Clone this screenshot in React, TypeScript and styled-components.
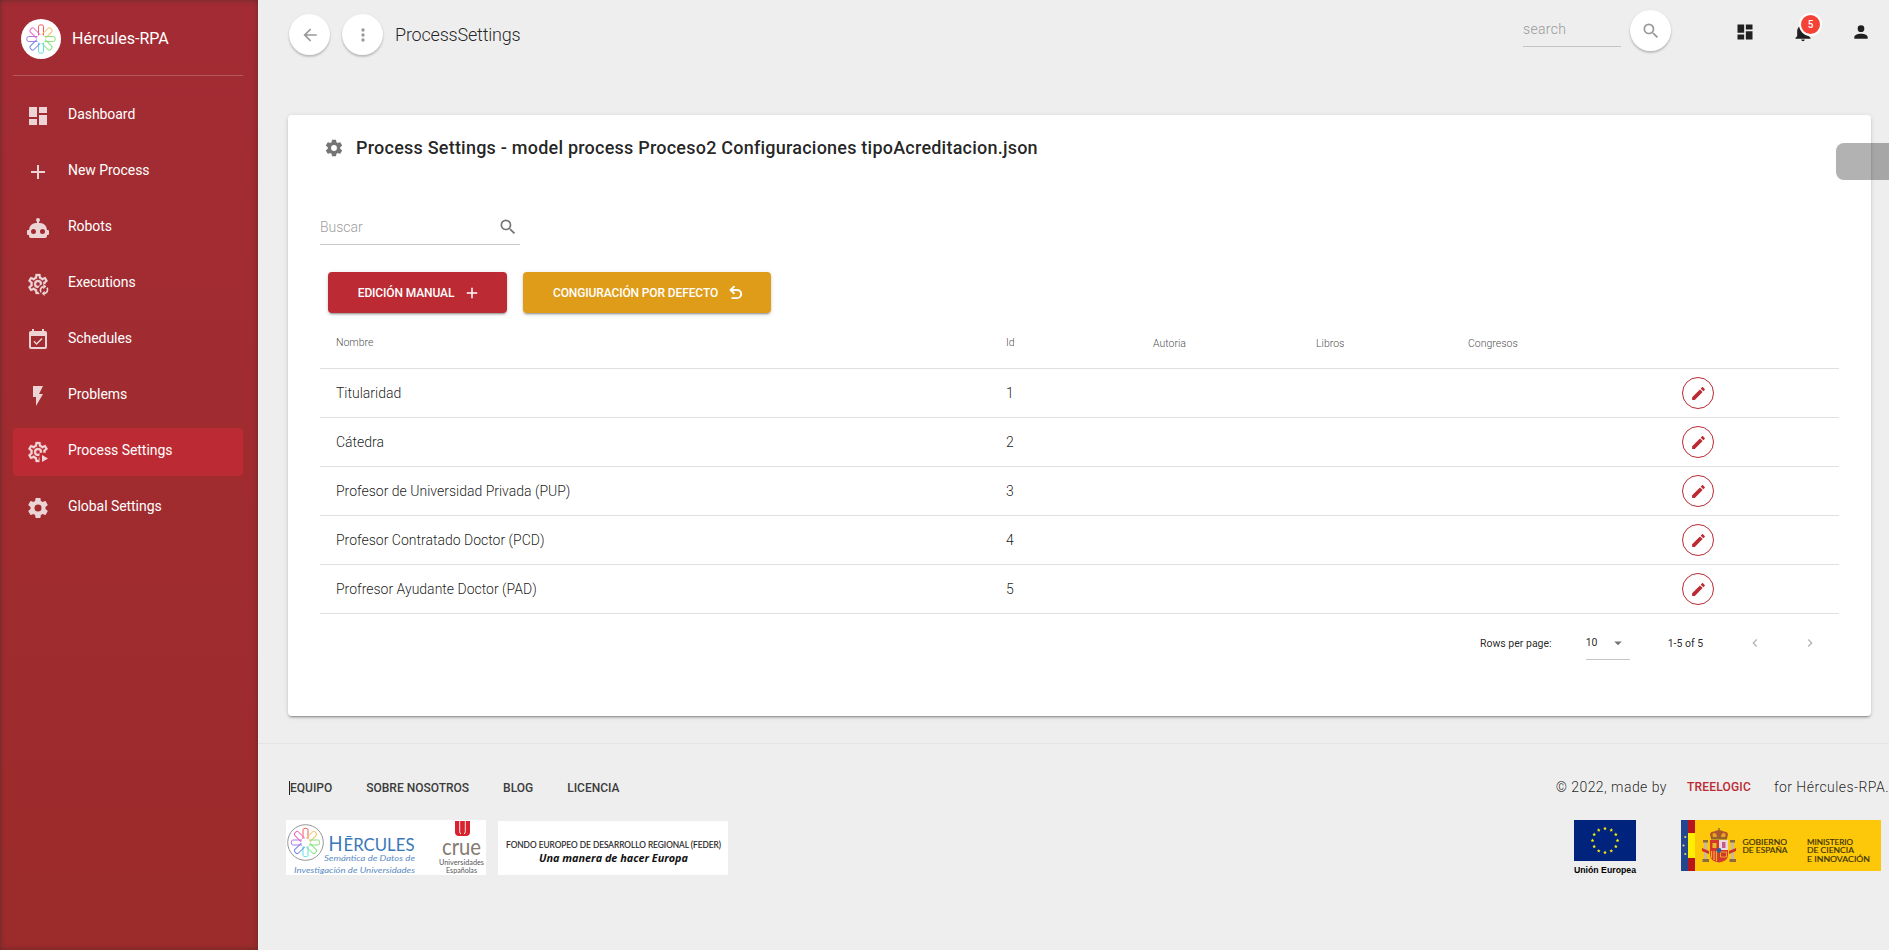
import React from 'react';
import styled, { createGlobalStyle } from 'styled-components';

const mdi = {
  dashboard: 'M13,3V9H21V3M13,21H21V11H13M3,21H11V15H3M3,13H11V3H3V13Z',
  plus: 'M19,13H13V19H11V13H5V11H11V5H13V11H19V13Z',
  robot:
    'M12,2A2,2 0 0,1 14,4C14,4.74 13.6,5.39 13,5.73V7H14A7,7 0 0,1 21,14H22A1,1 0 0,1 23,15V18A1,1 0 0,1 22,19H21V20A2,2 0 0,1 19,22H5A2,2 0 0,1 3,20V19H2A1,1 0 0,1 1,18V15A1,1 0 0,1 2,14H3A7,7 0 0,1 10,7H11V5.73C10.4,5.39 10,4.74 10,4A2,2 0 0,1 12,2M7.5,13A2.5,2.5 0 0,0 5,15.5A2.5,2.5 0 0,0 7.5,18A2.5,2.5 0 0,0 10,15.5A2.5,2.5 0 0,0 7.5,13M16.5,13A2.5,2.5 0 0,0 14,15.5A2.5,2.5 0 0,0 16.5,18A2.5,2.5 0 0,0 19,15.5A2.5,2.5 0 0,0 16.5,13Z',
  calendar:
    'M19,19H5V8H19M19,3H18V1H16V3H8V1H6V3H5C3.89,3 3,3.9 3,5V19A2,2 0 0,0 5,21H19A2,2 0 0,0 21,19V5A2,2 0 0,0 19,3M16.53,11.06L15.47,10L10.59,14.88L8.47,12.76L7.41,13.82L10.59,17L16.53,11.06Z',
  flash: 'M7,2V13H10V22L17,10H13L17,2H7Z',
  cog: 'M12,15.5A3.5,3.5 0 0,1 8.5,12A3.5,3.5 0 0,1 12,8.5A3.5,3.5 0 0,1 15.5,12A3.5,3.5 0 0,1 12,15.5M19.43,12.97C19.47,12.65 19.5,12.33 19.5,12C19.5,11.67 19.47,11.34 19.43,11L21.54,9.37C21.73,9.22 21.78,8.95 21.66,8.73L19.66,5.27C19.54,5.05 19.27,4.96 19.05,5.05L16.56,6.05C16.04,5.66 15.5,5.32 14.87,5.07L14.5,2.42C14.46,2.18 14.25,2 14,2H10C9.75,2 9.54,2.18 9.5,2.42L9.13,5.07C8.5,5.32 7.96,5.66 7.44,6.05L4.95,5.05C4.73,4.96 4.46,5.05 4.34,5.27L2.34,8.73C2.21,8.95 2.27,9.22 2.46,9.37L4.57,11C4.53,11.34 4.5,11.67 4.5,12C4.5,12.33 4.53,12.65 4.57,12.97L2.46,14.63C2.27,14.78 2.21,15.05 2.34,15.27L4.34,18.73C4.46,18.95 4.73,19.03 4.95,18.95L7.44,17.94C7.96,18.34 8.5,18.68 9.13,18.93L9.5,21.58C9.54,21.82 9.75,22 10,22H14C14.25,22 14.46,21.82 14.5,21.58L14.87,18.93C15.5,18.67 16.04,18.34 16.56,17.94L19.05,18.95C19.27,19.03 19.54,18.95 19.66,18.73L21.66,15.27C21.78,15.05 21.73,14.78 21.54,14.63L19.43,12.97Z',
  cogOutline:
    'M12,8A4,4 0 0,1 16,12A4,4 0 0,1 12,16A4,4 0 0,1 8,12A4,4 0 0,1 12,8M12,10A2,2 0 0,0 10,12A2,2 0 0,0 12,14A2,2 0 0,0 14,12A2,2 0 0,0 12,10M10,22C9.75,22 9.54,21.82 9.5,21.58L9.13,18.93C8.5,18.68 7.96,18.34 7.44,17.94L4.95,18.95C4.73,19.03 4.46,18.95 4.34,18.73L2.34,15.27C2.21,15.05 2.27,14.78 2.46,14.63L4.57,12.97L4.5,12L4.57,11L2.46,9.37C2.27,9.22 2.21,8.95 2.34,8.73L4.34,5.27C4.46,5.05 4.73,4.96 4.95,5.05L7.44,6.05C7.96,5.66 8.5,5.32 9.13,5.07L9.5,2.42C9.54,2.18 9.75,2 10,2H14C14.25,2 14.46,2.18 14.5,2.42L14.87,5.07C15.5,5.32 16.04,5.66 16.56,6.05L19.05,5.05C19.27,4.96 19.54,5.05 19.66,5.27L21.66,8.73C21.79,8.95 21.73,9.22 21.54,9.37L19.43,11L19.5,12L19.43,13L21.54,14.63C21.73,14.78 21.79,15.05 21.66,15.27L19.66,18.73C19.54,18.95 19.27,19.04 19.05,18.95L16.56,17.95C16.04,18.34 15.5,18.68 14.87,18.93L14.5,21.58C14.46,21.82 14.25,22 14,22H10M11.25,4L10.88,6.61C9.68,6.86 8.62,7.5 7.85,8.39L5.44,7.35L4.69,8.65L6.8,10.2C6.4,11.37 6.4,12.64 6.8,13.8L4.68,15.36L5.43,16.66L7.86,15.62C8.63,16.5 9.68,17.14 10.87,17.38L11.24,20H12.76L13.13,17.39C14.32,17.14 15.37,16.5 16.14,15.62L18.57,16.66L19.32,15.36L17.2,13.81C17.6,12.64 17.6,11.37 17.2,10.2L19.31,8.65L18.56,7.35L16.15,8.39C15.38,7.5 14.32,6.86 13.12,6.62L12.75,4H11.25Z',
  arrowLeft: 'M20,11V13H8L13.5,18.5L12.08,19.92L4.16,12L12.08,4.08L13.5,5.5L8,11H20Z',
  dots: 'M12,16A2,2 0 0,1 14,18A2,2 0 0,1 12,20A2,2 0 0,1 10,18A2,2 0 0,1 12,16M12,10A2,2 0 0,1 14,12A2,2 0 0,1 12,14A2,2 0 0,1 10,12A2,2 0 0,1 12,10M12,4A2,2 0 0,1 14,6A2,2 0 0,1 12,8A2,2 0 0,1 10,6A2,2 0 0,1 12,4Z',
  magnify:
    'M9.5,3A6.5,6.5 0 0,1 16,9.5C16,11.11 15.41,12.59 14.44,13.73L14.71,14H15.5L20.5,19L19,20.5L14,15.5V14.71L13.73,14.44C12.59,15.41 11.11,16 9.5,16A6.5,6.5 0 0,1 3,9.5A6.5,6.5 0 0,1 9.5,3M9.5,5C7,5 5,7 5,9.5C5,12 7,14 9.5,14C12,14 14,12 14,9.5C14,7 12,5 9.5,5Z',
  bell: 'M21,19V20H3V19L5,17V11C5,7.9 7.03,5.17 10,4.29C10,4.19 10,4.1 10,4A2,2 0 0,1 12,2A2,2 0 0,1 14,4C14,4.1 14,4.19 14,4.29C16.97,5.17 19,7.9 19,11V17L21,19M14,21A2,2 0 0,1 12,23A2,2 0 0,1 10,21',
  account:
    'M12,4A4,4 0 0,1 16,8A4,4 0 0,1 12,12A4,4 0 0,1 8,8A4,4 0 0,1 12,4M12,14C16.42,14 20,15.79 20,18V20H4V18C4,15.79 7.58,14 12,14Z',
  pencil:
    'M20.71,7.04C21.1,6.65 21.1,6 20.71,5.63L18.37,3.29C18,2.9 17.35,2.9 16.96,3.29L15.12,5.12L18.87,8.87M3,17.25V21H6.75L17.81,9.93L14.06,6.18L3,17.25Z',
  menuDown: 'M7,10L12,15L17,10H7Z',
  chevronLeft: 'M15.41,16.58L10.83,12L15.41,7.41L14,6L8,12L14,18L15.41,16.58Z',
  chevronRight: 'M8.59,16.58L13.17,12L8.59,7.41L10,6L16,12L10,18L8.59,16.58Z',
};

const GlobalStyle = createGlobalStyle`
  *, *::before, *::after { box-sizing: border-box; }
  html, body { margin: 0; overflow: hidden; background: #eee; }
  body { font-family: Roboto, sans-serif; color: rgba(0, 0, 0, 0.87); }
`;

const Shell = styled.div`
  display: flex;
  width: 100vw;
  height: 950px;
  overflow: hidden;
`;

const Sidebar = styled.aside`
  flex: none;
  width: 258px;
  padding: 0 15px 0 13px;
  color: #fff;
  background: linear-gradient(180deg, #a32c34 0%, #9c2b2b 100%);
  box-shadow: inset 0 0 5px rgba(40, 40, 40, 0.55);
`;

const Brand = styled.div`
  display: flex;
  align-items: center;
  height: 76px;
  padding: 2px 8px 0;
  gap: 11px;
  border-bottom: 1px solid rgba(255, 255, 255, 0.2);
  font-size: 16px;
`;

const BrandMark = styled.div`
  display: flex;
  align-items: center;
  justify-content: center;
  width: 40px;
  height: 40px;
  border-radius: 50%;
  background: #fff;
`;

const Nav = styled.nav`
  display: flex;
  flex-direction: column;
  gap: 8px;
  padding-top: 16px;
`;

const NavItem = styled.a<{ $active?: boolean }>`
  display: flex;
  align-items: center;
  height: 48px;
  padding: 0 13px;
  gap: 18px;
  border-radius: 4px;
  font-size: 14px;
  letter-spacing: -0.05px;
  background: ${(p) => (p.$active ? '#bc2a33' : 'transparent')};
  svg { opacity: 0.8; }
  span { margin-bottom: 4px; }
`;

const Main = styled.main`
  flex: 1;
  min-width: 0;
  display: flex;
  flex-direction: column;
`;

const TopBar = styled.header`
  display: flex;
  height: 115px;
  padding: 13px 18px 0 31px;
`;

const RoundButton = styled.button`
  display: flex;
  align-items: center;
  justify-content: center;
  width: 41px;
  height: 41px;
  padding: 0;
  border: 0;
  border-radius: 50%;
  background: #fff;
  color: #999;
  box-shadow: 0 2px 2px rgba(0, 0, 0, 0.14), 0 1px 3px rgba(0, 0, 0, 0.12);
`;

const TopLeft = styled.div`
  display: flex;
  align-items: center;
  gap: 12px;
  height: 43px;
  flex: 1;
`;

const PageName = styled.div`
  font-size: 18px;
  font-weight: 300;
  letter-spacing: -0.2px;
`;

const TopSearch = styled.div`
  width: 98px;
  height: 34px;
  padding-top: 7px;
  margin-right: 9px;
  border-bottom: 1px solid #c4c4c4;
  font-size: 14px;
  line-height: 18px;
  font-weight: 300;
  color: #9a9a9a;
  letter-spacing: 0.3px;
`;

const TopSearchButton = styled(RoundButton)`
  margin-top: -3px;
`;

const TopActions = styled.div`
  display: flex;
  align-items: flex-start;
  padding-top: 9px;
  margin-left: 64px;
  gap: 38px;
  color: #202020;
`;

const BellWrap = styled.div`
  position: relative;
  height: 20px;
`;

const Badge = styled.span`
  position: absolute;
  top: -9px;
  left: 6px;
  width: 23px;
  height: 23px;
  border: 2px solid #fff;
  border-radius: 50%;
  background: #f44336;
  color: #fff;
  font-size: 10px;
  font-weight: 500;
  line-height: 19px;
  text-align: center;
`;

const Card = styled.section`
  width: 1583px;
  height: 601px;
  margin-left: 30px;
  padding: 0 32px;
  border-radius: 4px;
  background: #fff;
  box-shadow: 0 3px 1px -2px rgba(0, 0, 0, 0.2), 0 2px 2px rgba(0, 0, 0, 0.14), 0 1px 5px rgba(0, 0, 0, 0.12);
`;

const CardTitle = styled.h1`
  display: flex;
  align-items: center;
  gap: 12px;
  height: 65px;
  margin: 0;
  padding-left: 4px;
  font-size: 18px;
  font-weight: 500;
  letter-spacing: 0.225px;
  svg { color: #757575; }
`;

const TableSearch = styled.div`
  display: flex;
  align-items: center;
  justify-content: space-between;
  width: 200px;
  height: 36px;
  margin-top: 29px;
  padding-right: 2px;
  border-bottom: 1px solid #c9c9c9;
  font-size: 14px;
  font-weight: 300;
  color: #a0a0a0;
  svg { color: #757575; }
`;

const Actions = styled.div`
  display: flex;
  gap: 16px;
  padding: 27px 0 0 8px;
`;

const ActionButton = styled.button<{ $color: string; $width: number }>`
  display: flex;
  align-items: center;
  justify-content: center;
  gap: 9px;
  width: ${(p) => p.$width}px;
  height: 41px;
  padding: 0 0 0 4px;
  border: 0;
  border-radius: 4px;
  background: ${(p) => p.$color};
  color: #fff;
  font-family: inherit;
  font-size: 12px;
  font-weight: 500;
  letter-spacing: -0.12px;
  box-shadow: 0 3px 1px -2px rgba(0, 0, 0, 0.2), 0 2px 2px rgba(0, 0, 0, 0.14), 0 1px 5px rgba(0, 0, 0, 0.12);
`;

const Row = styled.div<{ $head?: boolean }>`
  display: grid;
  grid-template-columns: 670px 147px 163px 152px 214px 173px;
  align-items: center;
  height: ${(p) => (p.$head ? 56 : 49)}px;
  padding-left: 16px;
  border-bottom: 1px solid #e0e0e0;
  font-size: ${(p) => (p.$head ? 10.5 : 14)}px;
  font-weight: 300;
  color: ${(p) => (p.$head ? 'rgba(0,0,0,0.75)' : 'rgba(0,0,0,0.9)')};
`;

const HeadCell = styled.span<{ $lower?: boolean }>`
  margin-top: ${(p) => (p.$lower ? 6 : 4)}px;
`;

const EditButton = styled.button`
  display: flex;
  align-items: center;
  justify-content: center;
  width: 32px;
  height: 32px;
  padding: 0;
  border: 1px solid #bc2a33;
  border-radius: 50%;
  background: transparent;
  color: #bc2a33;
`;

const Pager = styled.div`
  display: flex;
  align-items: center;
  height: 58px;
  padding-left: 1160px;
  font-size: 10.5px;
`;

const PageSize = styled.div`
  display: flex;
  align-items: center;
  justify-content: space-between;
  width: 44px;
  height: 34px;
  margin: 0 38px 0 34px;
  padding-right: 3px;
  border-bottom: 1px solid #c6c6c6;
  svg { color: #757575; }
`;

const PagerArrows = styled.div`
  display: flex;
  gap: 39px;
  margin-left: 44px;
  color: #b5b5b5;
`;

const Footer = styled.footer`
  margin-top: 27px;
  border-top: 1px solid #e4e4e4;
  padding: 29px 0 0 28px;
`;

const FooterRow = styled.div<{ $offset?: number }>`
  display: flex;
  justify-content: space-between;
  margin-top: ${(p) => p.$offset ?? 0}px;
`;

const FooterLinks = styled.div`
  display: flex;
  align-items: center;
  gap: 34px;
  height: 30px;
  padding-left: 4px;
  font-size: 12px;
  font-weight: 500;
  color: #3c3c3c;
`;

const FocusedLink = styled.span`
  box-shadow: -1px 0 0 #222;
`;

const Credits = styled.div`
  display: flex;
  align-items: center;
  height: 28px;
  font-size: 14px;
  font-weight: 300;
  letter-spacing: 0.45px;
  white-space: nowrap;
  strong { margin: 0 23px 0 20px; font-size: 12px; font-weight: 500; letter-spacing: 0.2px; color: #bc2a33; }
`;

const Logos = styled.div`
  display: flex;
  align-items: flex-start;
  svg { display: block; }
`;

const EdgeHandle = styled.div`
  position: absolute;
  top: 143px;
  right: 0;
  width: 53px;
  height: 37px;
  border-radius: 8px 0 0 8px;
  background: rgba(0, 0, 0, 0.3);
`;

function Icon({ path, size = 24 }: { path: string; size?: number }) {
  return (
    <svg width={size} height={size} viewBox="0 0 24 24" fill="currentColor">
      <path d={path} />
    </svg>
  );
}

function UndoIcon() {
  return (
    <svg width={18} height={18} viewBox="0 0 24 24" fill="none" stroke="currentColor" strokeWidth="2.6">
      <path d="M10 2.800L4.800 8L10 13.200M5 8H13.500A5.300 5.300 0 0 1 13.500 18.800H6" />
    </svg>
  );
}

function CogWith({ kind }: { kind: 'sync' | 'play' }) {
  return (
    <svg width={24} height={24} viewBox="0 0 24 24">
      <mask id={`cog-${kind}`}>
        <rect width="24" height="24" fill="#fff" />
        {kind === 'sync' ? <circle cx="18" cy="18" r="6" fill="#000" /> : <path d="M13.5 12.8H24V24H13.5Z" fill="#000" />}
      </mask>
      <path d={mdi.cogOutline} fill="currentColor" stroke="currentColor" strokeWidth="0.3" mask={`url(#cog-${kind})`} />
      {kind === 'sync' ? (
        <g fill="none" stroke="currentColor" strokeWidth="1.7">
          <path d="M15 20.2A3.6 3.6 0 0 1 17.6 14.6M21 15.8A3.6 3.6 0 0 1 18.4 21.4" />
          <path d="M17.3 11.800L20.300 14.600L17.300 17.300ZM18.700 18.700L15.700 21.400L18.700 24Z" fill="currentColor" stroke="none" />
        </g>
      ) : (
        <path d="M16 15V22L22 18.5Z" fill="currentColor" />
      )}
    </svg>
  );
}

const petals = ['#f25c5c', '#f5c264', '#8be07a', '#7be67b', '#5fe3e6', '#6f86ee', '#a77bea', '#ef66c8'];

function Flower({ ring }: { ring?: boolean }) {
  return (
    <g fill="none" strokeWidth="1">
      {ring && <circle r="17.8" stroke="#8a8a8a" strokeWidth="0.9" />}
      {petals.map((c, i) => (
        <path key={c} d="M-2.500 -3.500V-12.700Q-2.500 -14.200 0 -14.200Q2.500 -14.200 2.500 -12.700V-3.500" stroke={c} transform={`rotate(${i * 45})`} />
      ))}
    </g>
  );
}

function HerculesLogo() {
  return (
    <svg width="200" height="55" viewBox="0 0 200 55">
      <rect width="200" height="55" fill="#fff" />
      <g transform="translate(19.500 22.500)">
        <Flower ring />
      </g>
      <g fontFamily="Lato, sans-serif" fill="#3b78b8">
        <text x="42.500" y="30.500" fontSize="22" textLength="14" lengthAdjust="spacingAndGlyphs">H</text>
        <text x="57.500" y="30.500" fontSize="17.500" textLength="71" lengthAdjust="spacingAndGlyphs">ĒRCULES</text>
        <g fontStyle="italic" fontSize="8.500" fill="#5c8cc4">
          <text x="38" y="41" textLength="91" lengthAdjust="spacingAndGlyphs">Semántica de Datos de</text>
          <text x="8" y="52.500" textLength="121" lengthAdjust="spacingAndGlyphs">Investigación de Universidades</text>
        </g>
      </g>
      <path d="M169 1H184V12Q184 16 180 16H173Q169 16 169 12Z" fill="#d8232f" />
      <path d="M173.700 1V11.500Q173.700 13.500 175 14M179.300 1V11.500Q179.300 13.500 178 14" fill="none" stroke="#fff" strokeWidth="0.900" />
      <g fontFamily="Lato, sans-serif" fill="#857a70">
        <text x="156" y="34.500" fontSize="23" textLength="39" lengthAdjust="spacingAndGlyphs">crue</text>
        <text x="153" y="44.500" fontSize="7" textLength="45" lengthAdjust="spacingAndGlyphs" fill="#555">Universidades</text>
        <text x="160" y="52.800" fontSize="7" textLength="31" lengthAdjust="spacingAndGlyphs" fill="#555">Españolas</text>
      </g>
    </svg>
  );
}

function FederLogo() {
  return (
    <svg width="230" height="54" viewBox="0 0 230 54">
      <rect width="230" height="54" fill="#fff" />
      <text x="8" y="26.500" fontFamily="Lato, sans-serif" fontSize="8.500" fill="#222" stroke="#222" strokeWidth="0.150" textLength="215" lengthAdjust="spacingAndGlyphs">
        FONDO EUROPEO DE DESARROLLO REGIONAL (FEDER)
      </text>
      <text x="41" y="40.500" fontFamily="'Open Sans', sans-serif" fontSize="10.500" fontWeight="700" fontStyle="italic" fill="#111" textLength="149" lengthAdjust="spacingAndGlyphs">
        Una manera de hacer Europa
      </text>
    </svg>
  );
}

const star = 'M0 -2L0.5 -0.7L1.9 -0.6L0.8 0.3L1.2 1.6L0 0.9L-1.2 1.6L-0.8 0.3L-1.9 -0.6L-0.5 -0.7Z';

function EuropeLogo() {
  return (
    <svg width="64" height="56" viewBox="0 0 64 56">
      <rect x="1" width="62" height="41" fill="#00247d" />
      {Array.from({ length: 12 }, (_, i) => {
        const a = (i * Math.PI) / 6;
        return <path key={i} d={star} fill="#fff200" transform={`translate(${32 + Math.sin(a) * 12.5} ${20.5 - Math.cos(a) * 12})`} />;
      })}
      <text x="1" y="53" fontFamily="'Liberation Sans', sans-serif" fontSize="8.5" fontWeight="700" textLength="62" lengthAdjust="spacingAndGlyphs">
        Unión Europea
      </text>
    </svg>
  );
}

function GobiernoLogo() {
  return (
    <svg width="200" height="51" viewBox="0 0 200 51">
      <rect width="200" height="51" fill="#fdc80a" />
      <rect width="7" height="51" fill="#24468e" />
      <rect x="7" width="7" height="51" fill="#b8141b" />
      <rect x="7" y="13" width="7" height="25" fill="#ffee00" />
      {[17, 25.5, 34].map((y, i) => (
        <circle key={y} cx={i === 1 ? 2.5 : 4.3} cy={y} r="1.1" fill="#e8d860" />
      ))}
      <g>
        <path d="M23 22H26V40H23ZM50 22H53V40H50Z" fill="#c9b8a4" />
        <path d="M22 20H27V22.5H22ZM49 20H54V22.5H49ZM21.5 39H28V42H21.5ZM48.5 39H55V42H48.5Z" fill="#8d6b3d" />
        <path d="M21 28L28 31V34L21 31ZM55 28L48 31V34L55 31Z" fill="#d1332b" />
        <path d="M29 20H47V35Q47 41 38 42.5Q29 41 29 35Z" fill="#d4372c" />
        <path d="M38 20H47V30H38Z" fill="#e9d9dd" />
        <path d="M41 22H44.500V28H41Z" fill="#c75a8c" />
        <path d="M31.500 23H35.500V28H31.500Z" fill="#e9b92a" />
        <path d="M30.500 31V38M33 31V40M35.500 31V41" stroke="#efb62a" strokeWidth="1.200" />
        <path d="M39.500 32H45.500V37H39.500Z" fill="none" stroke="#e9a92a" />
        <circle cx="38" cy="30.500" r="2.400" fill="#2d5fa3" />
        <path d="M30 18.500Q27 11.500 33 11.500Q38 8.500 43 11.500Q49 11.500 46 18.500Z" fill="#b5532a" />
        <path d="M32 17Q30 13 34 13Q36 14 36 17ZM44 17Q46 13 42 13Q40 14 40 17Z" fill="#e2a52a" />
        <path d="M30 17.500H46V19.500H30ZM37.300 8H38.700V17H37.300Z" fill="#8c6a2c" />
      </g>
      <g fontFamily="Lato, sans-serif" fontSize="7.400" fill="#3a3008" stroke="#3a3008" strokeWidth="0.150">
        <text x="61.500" y="24.500" textLength="44.500" lengthAdjust="spacingAndGlyphs">GOBIERNO</text>
        <text x="61.500" y="33" textLength="45" lengthAdjust="spacingAndGlyphs">DE ESPAÑA</text>
        <text x="126" y="24.500" textLength="46" lengthAdjust="spacingAndGlyphs">MINISTERIO</text>
        <text x="126" y="33" textLength="47" lengthAdjust="spacingAndGlyphs">DE CIENCIA</text>
        <text x="126" y="42" textLength="63" lengthAdjust="spacingAndGlyphs">E INNOVACIÓN</text>
      </g>
    </svg>
  );
}

const EuropeSlot = styled.div`
  margin-right: 44px;
`;

const FederSlot = styled.div`
  margin: 1px 0 0 12px;
`;

const RightLogos = styled(Logos)`
  padding-right: 8px;
`;

const navItems: { label: string; icon: React.ReactNode; active?: boolean }[] = [
  { label: 'Dashboard', icon: <Icon path={mdi.dashboard} /> },
  { label: 'New Process', icon: <Icon path={mdi.plus} /> },
  { label: 'Robots', icon: <Icon path={mdi.robot} /> },
  { label: 'Executions', icon: <CogWith kind="sync" /> },
  { label: 'Schedules', icon: <Icon path={mdi.calendar} /> },
  { label: 'Problems', icon: <Icon path={mdi.flash} /> },
  { label: 'Process Settings', icon: <CogWith kind="play" />, active: true },
  { label: 'Global Settings', icon: <Icon path={mdi.cog} /> },
];

const rows = [
  'Titularidad',
  'Cátedra',
  'Profesor de Universidad Privada (PUP)',
  'Profesor Contratado Doctor (PCD)',
  'Profresor Ayudante Doctor (PAD)',
];

export default function App() {
  return (
    <Shell>
      <GlobalStyle />
      <Sidebar>
        <Brand>
          <BrandMark>
            <svg width="36" height="36" viewBox="-18 -18 36 36">
              <Flower />
            </svg>
          </BrandMark>
          Hércules-RPA
        </Brand>
        <Nav>
          {navItems.map((item) => (
            <NavItem key={item.label} $active={item.active}>
              {item.icon}
              <span>{item.label}</span>
            </NavItem>
          ))}
        </Nav>
      </Sidebar>
      <Main>
        <TopBar>
          <TopLeft>
            <RoundButton><Icon path={mdi.arrowLeft} size={20} /></RoundButton>
            <RoundButton><Icon path={mdi.dots} size={20} /></RoundButton>
            <PageName>ProcessSettings</PageName>
          </TopLeft>
          <TopSearch>search</TopSearch>
          <TopSearchButton><Icon path={mdi.magnify} size={20} /></TopSearchButton>
          <TopActions>
            <Icon path={mdi.dashboard} size={20} />
            <BellWrap>
              <Icon path={mdi.bell} size={20} />
              <Badge>5</Badge>
            </BellWrap>
            <Icon path={mdi.account} size={20} />
          </TopActions>
        </TopBar>
        <Card>
          <CardTitle>
            <Icon path={mdi.cog} size={20} />
            Process Settings - model process Proceso2 Configuraciones tipoAcreditacion.json
          </CardTitle>
          <TableSearch>
            Buscar
            <Icon path={mdi.magnify} size={20} />
          </TableSearch>
          <Actions>
            <ActionButton $color="#bc2a33" $width={179}>
              EDICIÓN MANUAL <Icon path={mdi.plus} size={18} />
            </ActionButton>
            <ActionButton $color="#df9c18" $width={248}>
              CONGIURACIÓN POR DEFECTO <UndoIcon />
            </ActionButton>
          </Actions>
          <Row $head>
            <HeadCell>Nombre</HeadCell>
            <HeadCell>Id</HeadCell>
            <HeadCell $lower>Autoria</HeadCell>
            <HeadCell $lower>Libros</HeadCell>
            <HeadCell $lower>Congresos</HeadCell>
          </Row>
          {rows.map((name, i) => (
            <Row key={name}>
              <span>{name}</span>
              <span>{i + 1}</span>
              <span />
              <span />
              <span />
              <EditButton><Icon path={mdi.pencil} size={17} /></EditButton>
            </Row>
          ))}
          <Pager>
            Rows per page:
            <PageSize>
              10
              <Icon path={mdi.menuDown} size={18} />
            </PageSize>
            1-5 of 5
            <PagerArrows>
              <Icon path={mdi.chevronLeft} size={16} />
              <Icon path={mdi.chevronRight} size={16} />
            </PagerArrows>
          </Pager>
        </Card>
        <Footer>
          <FooterRow>
            <FooterLinks>
              <FocusedLink>EQUIPO</FocusedLink>
              <span>SOBRE NOSOTROS</span>
              <span>BLOG</span>
              <span>LICENCIA</span>
            </FooterLinks>
            <Credits>
              © 2022, made by <strong>TREELOGIC</strong> for Hércules-RPA.
            </Credits>
          </FooterRow>
          <FooterRow $offset={17}>
            <Logos>
              <HerculesLogo />
              <FederSlot><FederLogo /></FederSlot>
            </Logos>
            <RightLogos>
              <EuropeSlot><EuropeLogo /></EuropeSlot>
              <GobiernoLogo />
            </RightLogos>
          </FooterRow>
        </Footer>
      </Main>
      <EdgeHandle />
    </Shell>
  );
}
